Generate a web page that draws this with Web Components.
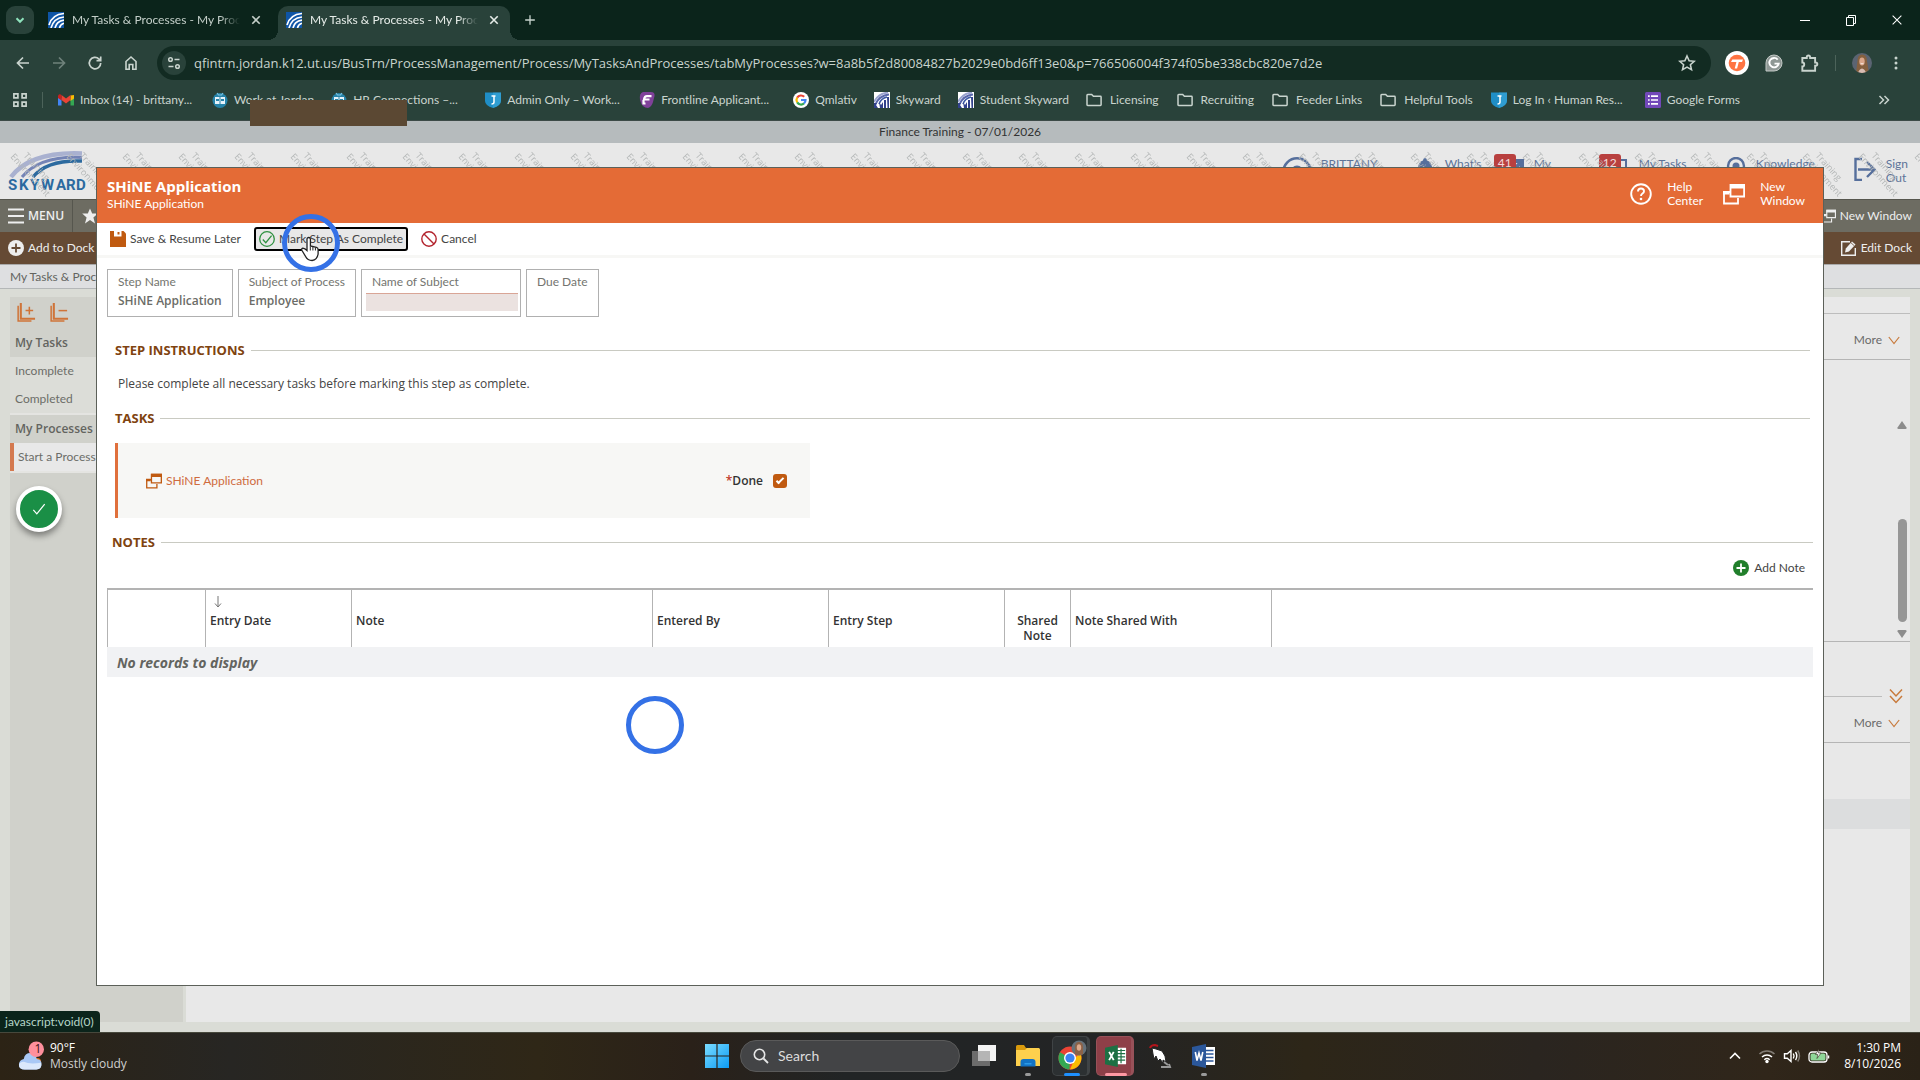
<!DOCTYPE html>
<html lang="en">
<head>
<meta charset="utf-8">
<title>My Tasks &amp; Processes - My Processes</title>
<style>
  html, body { margin: 0; height: 100%; overflow: hidden; }
  body { font: 12px/16px "Open Sans", "Noto Sans", sans-serif; --ui: Lato, "Open Sans", sans-serif; color: #444; }
</style>
</head>
<body>
<app-desktop></app-desktop>
<script>
const BASE = `<style>
  *, *::before, *::after { box-sizing: border-box; }
  button { font: inherit; color: inherit; background: none; border: 0; padding: 0; margin: 0; display: inline-flex; align-items: center; justify-content: center; white-space: nowrap; }
  a { color: inherit; text-decoration: none; }
  [hidden] { display: none; }
</style>`;
const define = (name, html) => customElements.define(name, class extends HTMLElement {
  constructor() {
    super();
    const t = document.createElement('template');
    t.innerHTML = BASE + (typeof html === 'function' ? html(this) : html);
    this.attachShadow({ mode: 'open' }).append(t.content.cloneNode(true));
  }
});

/* ---------- icons: [viewBox size, markup] ---------- */
const line = (d, w = 1.5) => `<path d="${d}" fill="none" stroke="currentColor" stroke-width="${w}"/>`;
const ICONS = {
  down: ['0 0 16 16', line('M4.5 6.3 8 9.8l3.5-3.5', 2)],
  close: ['0 0 16 16', line('M4.3 4.3l7.4 7.4M11.7 4.3l-7.4 7.4', 1.6)],
  plus: ['0 0 16 16', line('M8 2.5v11M2.5 8h11')],
  min: ['0 0 16 16', line('M3 8.5h10', 1)],
  restore: ['0 0 16 16', line('M3.5 5.5h7v8h-7zM5.5 5.300V3.500h7v8h-2', 1)],
  winclose: ['0 0 16 16', line('M3 3l10 10M13 3 3 13', 1.2)],
  back: ['0 0 16 16', line('M14 8H3M8 2.500 2.500 8 8 13.500', 1.7)],
  fwd: ['0 0 16 16', line('M2 8h11M8 2.500 13.500 8 8 13.500', 1.7)],
  reload: ['0 0 16 16', line('M13.700 8A5.700 5.700 0 1 1 12 4l1.500 1.500M13.700 1.500v4.200H9.500', 1.7)],
  home: ['0 0 16 16', line('M3 6.500 8 2l5 4.500V14.200H9.800V9.500H6.200v4.700H3z', 1.6)],
  tune: ['0 0 16 16', line('M8.500 4.500h5M2.500 11.500h5', 1.5) + '<g fill="none" stroke="currentColor" stroke-width="1.5"><circle cx="4.500" cy="4.500" r="1.800"/><circle cx="11.500" cy="11.500" r="1.800"/></g>'],
  star: ['0 0 16 16', line('M8 1.800l1.900 4.200 4.500.5-3.400 3 1 4.500L8 11.700 4 14l1-4.500-3.400-3 4.500-.5z', 1.4)],
  puzzle: ['0 0 18 18', line('M3 4.500h4V3.800a1.500 1.500 0 0 1 3 0v.7h4.500v4h.5a1.500 1.500 0 0 1 0 3h-.5V16H3v-4a1.700 1.700 0 0 0 0-3.400z', 1.7)],
  dots: ['0 0 16 16', '<g fill="currentColor"><circle cx="8" cy="3" r="1.500"/><circle cx="8" cy="8" r="1.500"/><circle cx="8" cy="13" r="1.500"/></g>'],
  apps: ['0 0 16 16', '<g fill="none" stroke="currentColor" stroke-width="1.700"><path d="M1.900 1.900h4v4h-4zM10.100 1.900h4v4h-4zM1.900 10.100h4v4h-4zM10.100 10.100h4v4h-4z"/></g>'],
  folder: ['0 0 16 16', line('M1 3.200q0-.7.700-.7h4l1.700 1.800h7q.7 0 .7.700v7.800q0 .7-.7.700H1.700q-.7 0-.7-.7z', 1.5)],
  more2: ['0 0 16 16', line('M3.500 4l4 4-4 4M8.500 4l4 4-4 4', 1.5)],
  sky: ['0 0 16 16', '<path fill="#0f55a6" d="M0 0h16v16H0z"/><path d="M1 13C3 6 9 2 16 1.500M3 16C5 9 10 5.500 16 5M7 16c1-4.500 4-7 9-7.800M11.500 16c.5-2.500 2-4 4.500-4.800" fill="none" stroke="#fff" stroke-width="1.700"/>'],
  sky2: ['0 0 16 16', '<path fill="#fff" d="M0 0h16v16H0z"/><path d="M0 10C3 4 8 1 14 .5" fill="none" stroke="#9aa3cf" stroke-width="1.800"/><path d="M1 13C4 6 9 3 15 2.500" fill="none" stroke="#5a68ac" stroke-width="1.800"/><path d="M5 12c1-3 4-6 8-7" fill="none" stroke="#3d5aa5" stroke-width="1.600"/><path d="M0 11h3l-1 2 2 3H0zM5 10l2 3 2-3v6H6zM10 8h2v8h-2zM13 5h2v11h-1.500z" fill="#31418c"/>'],
  gmail: ['0 0 16 16', '<path fill="#4285f4" d="M0 4v9.500h3.500V6.500z"/><path fill="#34a853" d="M16 4v9.500h-3.500V6.500z"/><path fill="#fbbc04" d="M12.500 3.500 16 3v3.500L12.500 9z"/><path fill="#ea4335" d="M3.500 3 8 6.500 12.500 3v5L8 11.500 3.500 8z"/><path fill="#c5221f" d="M0 3.500Q1.500 1.500 3.500 3v5.500L0 6z"/>'],
  robot: ['0 0 16 16', '<circle cx="8" cy="8.500" r="7.500" fill="#2683a8"/><path d="M5 1l1.500 2h3L11 1" fill="none" stroke="#7cc4e2" stroke-width="1.200"/><rect x="3" y="5" width="10" height="7" fill="#e6f3fa"/><path fill="#2683a8" d="M4 7h3v2H4zM9 7h3v2H9zM7.500 5h1v7h-1z"/>'],
  shield: ['0 0 16 16', '<path fill="#1f8ec6" d="M0 .5h16V9q0 4.500-8 7Q0 13.500 0 9z"/><path fill="#43b0dd" d="M8 .5h8V9q0 4.500-8 7z" opacity=".45"/><path d="M6.500 4h4M9 4v6q0 2-2.500 2" fill="none" stroke="#fff" stroke-width="1.500"/>'],
  frontline: ['0 0 16 16', '<path fill="#80419a" d="M4 0h8q4 0 3.500 4L14 10q-1.500 5-5 6-6 0-8-8-1-7 3-8z"/><path d="M12.500 4.200H8Q5.500 4.200 5 7.500h5.500M4.500 8v3.500h2" fill="none" stroke="#fff" stroke-width="2.200"/>'],
  google: ['0 0 16 16', '<circle cx="8" cy="8" r="8" fill="#fff"/><g fill="none" stroke-width="2.200"><path stroke="#ea4335" d="M4.200 5.600A4.500 4.500 0 0 1 11.200 4.800"/><path stroke="#fbbc04" d="M4.200 5.600a4.600 4.600 0 0 0 0 4.800"/><path stroke="#34a853" d="M4.200 10.400a4.500 4.500 0 0 0 6.800 1"/><path stroke="#4285f4" d="M11 11.400A4.500 4.500 0 0 0 12.500 8H8"/></g>'],
  forms: ['0 0 16 16', '<rect width="16" height="16" rx="1.500" fill="#7248b9"/><path stroke="#fff" stroke-width="1.700" d="M6 4.200h7M6 8h7M6 11.800h7"/><path stroke="#fff" stroke-width="1.700" d="M3 4.200h1.700M3 8h1.700M3 11.800h1.700"/>'],
  tango: ['0 0 24 24', '<circle cx="12" cy="12" r="12" fill="#fff"/><circle cx="12" cy="12" r="8.300" fill="#ff7442"/><path d="M6 11l1.300-2.500H18L17 11h-3.200l-1.700 6.500H9.700L11.400 11z" fill="#fff"/>'],
  grammarly: ['0 0 18 18', '<path fill="#8f9895" stroke="#c3c9c6" d="M9 1a8 8 0 1 1 0 16H1V9a8 8 0 0 1 8-8z"/><path d="M12.700 5.600a4.700 4.700 0 1 0 1 4H9.500" fill="none" stroke="#fff" stroke-width="1.900"/>'],
  avatar: ['0 0 20 20', '<clipPath id="c"><circle cx="10" cy="10" r="10"/></clipPath><g clip-path="url(#c)"><path fill="#5b6472" d="M0 0h20v20H0z"/><path fill="#85603f" d="M10 1.500q5 0 5 6.500l2 12H4L5.500 8Q5.500 1.500 10 1.500z"/><path fill="#d8bdb4" d="M6 20q1-4 4-4.500 3 .5 4 4.500z"/><ellipse cx="10" cy="8.500" rx="2.700" ry="4" fill="#dba68a"/><path d="M8.500 10.300q1.500 1.300 3 0" stroke="#fff" stroke-width=".8" fill="none"/></g>'],
  menu: ['0 0 16 16', line('M0 1.500h16M0 8h16M0 14.500h16', 2)],
  starfill: ['0 0 16 16', '<path fill="currentColor" d="M8 .5l2.200 5h5.600l-4.400 3.900 1.600 6.100L8 12l-5 3.500 1.600-6.100L.2 5.500h5.600z"/>'],
  addfill: ['0 0 16 16', '<circle cx="8" cy="8" r="8" fill="currentColor"/><path d="M8 3.500v9M3.500 8h9" stroke="var(--cut,#654a34)" stroke-width="1.800"/>'],
  newwin: ['0 0 22 22', '<path fill="none" stroke="currentColor" stroke-width="1.800" d="M8 9H1v11.500h14V15"/><path fill="none" stroke="currentColor" stroke-width="1.800" d="M7.500 2h13.600v11.500H7.500z"/><path fill="currentColor" d="M7 1h15v4.500H7zM0 8h6.500v3.500H0z"/>'],
  edit: ['0 0 16 16', '<path fill="none" stroke="currentColor" stroke-width="1.400" d="M9 1.700H.7v13.600h13.600V8"/><path fill="currentColor" d="M4 12.500l.8-4L11 1.500 14.500 4.500 8 11.500z"/><path d="M10 2.800l3.300 3" stroke="#654a34" stroke-width=".8"/>'],
  user: ['0 0 30 30', '<circle cx="15" cy="15" r="13.700" fill="none" stroke="currentColor" stroke-width="2.600"/><circle cx="15" cy="15" r="6.500" fill="currentColor"/>'],
  bell: ['0 0 22 22', '<path fill="currentColor" d="M11 1q2 0 2 2.500 5 1.500 5 8l2.500 7h-19L4 11.500q0-6.500 5-8Q9 1 11 1z"/>'],
  export: ['0 0 22 22', line('M8 4h11v12M19 4 8 16', 4)],
  tasks: ['0 0 22 22', line('M2 3h16v17H2z', 2)],
  bulb: ['0 0 22 22', '<circle cx="11" cy="9" r="8" fill="none" stroke="currentColor" stroke-width="2.400"/><circle cx="11" cy="9" r="3.500" fill="currentColor"/>'],
  signout: ['0 0 24 24', line('M9 2H2.500v21H9M5 12.500h16M14 5 21.500 12.500 14 20', 2.4)],
  help: ['0 0 22 22', '<circle cx="11" cy="11" r="9.800" fill="none" stroke="currentColor" stroke-width="1.900"/><path d="M8 8.500q0-3 3-3t3 2.700q0 1.300-1.500 2.300T11 13" fill="none" stroke="currentColor" stroke-width="1.900"/><circle cx="11" cy="16" r="1.300" fill="currentColor"/>'],
  save: ['0 0 16 16', '<path fill="#c05a10" d="M0 0h13.500L16 2.500V16H0z"/><path fill="#fff" d="M4 0h7.500v5.500H4z"/><path fill="#c05a10" d="M7.500 1h2v2.500h-2z"/>'],
  check: ['0 0 16 16', '<circle cx="8" cy="8" r="7.300" fill="none" stroke="#2f9141" stroke-width="1.300"/><path d="M3.800 8.500l3 3.200 5.800-7" fill="none" stroke="#2f9141" stroke-width="1.300"/>'],
  ban: ['0 0 16 16', '<circle cx="8" cy="8" r="7.200" fill="none" stroke="#b3242e" stroke-width="1.400"/><path d="M3 3l10 10" stroke="#b3242e" stroke-width="1.400"/>'],
  expand: ['0 0 20 20', '<g fill="none" stroke="#cf7439" stroke-width="1.600"><path d="M1.200 3v16h14"/><path d="M4 0v16.500h15" stroke-width="2.200"/><path d="M9 8h8M13 4v8"/></g>'],
  collapse: ['0 0 20 20', '<g fill="none" stroke="#cf7439" stroke-width="1.600"><path d="M1.200 3v16h14"/><path d="M4 0v16.500h15" stroke-width="2.200"/><path d="M9 8h9"/></g>'],
  tick: ['0 0 16 16', line('M1.500 9l4 4.500L14.500 2.500', 1.4)],
  sort: ['0 0 10 12', line('M5 0v11M2 7.500 5 11l3-3.500', 1)],
  chev: ['0 0 12 12', line('M.8 3 6 9.500 11.200 3', 1.2)],
  chev2: ['0 0 14 16', line('M1 1.500l6 6.500 6-6.500M1 8l6 6.500L13 8', 1.5)],
  tri: ['0 0 10 8', '<path fill="#8c8c8c" d="M5 0l4.500 6.500q.5 1.500-1 1.500h-7Q0 8 .5 6.500z"/>'],
  weather: ['0 0 28 32', '<circle cx="21" cy="22" r="4" fill="#e0701c"/><path d="M8 30q-6 0-6-5.500Q2.500 20 7 19q1-6 7-6 5.500.5 6.500 6 5 .5 5 5.500T20 30z" fill="#a9c8f5"/><path d="M8 30q-6 0-6-5 1-3 5-3 6 3 18 1 1 7-5 7z" fill="#dbe8fb"/><circle cx="20" cy="9" r="8" fill="#ff8f9c"/>'],
  win: ['0 0 24 24', '<linearGradient id="g" x1="0" y1="0" x2="1" y2="1"><stop offset="0" stop-color="#7adcff"/><stop offset="1" stop-color="#0c9bf5"/></linearGradient><path fill="url(#g)" d="M0 0h11.400v11.400H0zM12.600 0H24v11.400H12.600zM0 12.600h11.400V24H0zM12.600 12.600H24V24H12.600z"/>'],
  search: ['0 0 16 16', line('M10.500 10.500 15 15', 1.8) + '<circle cx="6.500" cy="6.500" r="5.200" fill="none" stroke="currentColor" stroke-width="1.600"/>'],
  taskview: ['0 0 24 24', '<path fill="#6c6c6c" d="M0 7h18v15H0z"/><path fill="#f4f4f4" d="M6 1h18v16H6z"/><path fill="#b5b5b5" d="M6 7h12v10H6z"/>'],
  files: ['0 0 24 24', '<path fill="#d99a0c" d="M0 2.500Q0 1 1.500 1H8l2 3h13v4H0z"/><path fill="#fdd04d" d="M0 6h9l2-2h11.500Q24 4 24 5.500V22H0z"/><path fill="#1273c4" d="M4.500 18q0-3 3-3h9q3 0 3 3v4.500h-15z"/><path fill="#2b9be6" d="M8.500 19h7v1.500h-7z"/>'],
  chrome: ['0 0 32 32', '<circle cx="14" cy="18" r="11.500" fill="#ea4335"/><path fill="#34a853" d="M4 12.200 14 18l-.5 11.500A11.500 11.500 0 0 1 4 12.200z"/><path fill="#fbbc04" d="M14 29.500 19 18l5.200-5.200A11.500 11.500 0 0 1 14 29.500z"/><circle cx="14" cy="18" r="6" fill="#fff"/><circle cx="14" cy="18" r="4.600" fill="#3b82f2"/><circle cx="23" cy="8" r="7.500" fill="#66717a"/><path fill="#8b6248" d="M23 2q4 0 4 5v7q-4 2.500-8 0V7q0-5 4-5z"/><ellipse cx="23" cy="7.500" rx="2.200" ry="3.200" fill="#dca98c"/>'],
  excel: ['0 0 24 24', '<path fill="#fff" d="M12 3h11v18H12z"/><path d="M13 6h9M13 9.500h9M13 13h9M13 16.500h9M17.500 4v16" stroke="#1d7044" stroke-width="1.300"/><path fill="#1d7044" d="M0 3 14 0v24L0 21z"/><path d="M4.500 7.500l5 9M9.500 7.500l-5 9" stroke="#fff" stroke-width="2"/>'],
  hand: ['0 0 24 24', '<path d="M2 4q1-3 5-3l3 1" stroke="#b3141b" stroke-width="2" fill="none"/><path fill="#fff" stroke="#222" d="M4 4l4 1 6 2 3 5 1 6-3-2 0 3-3-4-2 2-2-5-2 3-1-5z"/><path d="M16 18l4 3M13 23h9l-1-3" stroke="#999" stroke-width="2" fill="none"/>'],
  word: ['0 0 24 24', '<path fill="#fff" d="M12 3h11v18H12z"/><path d="M14 6.500h7.500M14 10h7.500M14 13.500h7.500M14 17h7.500" stroke="#2b579a" stroke-width="1.300"/><path fill="#2b579a" d="M0 3 14 0v24L0 21z"/><path d="M3.300 8l1.700 8.500L7 9l2 7.500L10.800 8" fill="none" stroke="#fff" stroke-width="1.600"/>'],
  up: ['0 0 16 16', line('M3 10.500 8 5.500l5 5', 1.6)],
  wifi: ['0 0 18 16', '<g fill="none" stroke="currentColor" stroke-width="1.500"><path opacity=".4" d="M1.500 6a11 11 0 0 1 15 0"/><path d="M4 9a7.500 7.500 0 0 1 10 0M6.300 11.700a4 4 0 0 1 5.400 0"/></g><circle cx="9" cy="13.500" r="1.700" fill="currentColor"/>'],
  volume: ['0 0 18 16', '<g fill="none" stroke="currentColor" stroke-width="1.400"><path d="M1.500 5.800h2.800L8 2.500v11L4.300 10.200H1.500zM10.300 5.500q1.500 2.500 0 5M12.500 4q2.600 4 0 8"/><path opacity=".4" d="M14.700 2.500q3.600 5.500 0 11"/></g>'],
  battery: ['0 0 22 16', '<rect x="1" y="4" width="18" height="10" rx="3" fill="none" stroke="#fff" stroke-width="1.300"/><rect x="2.500" y="5.500" width="15" height="7" rx="1.500" fill="#8fd698"/><path d="M20.500 7.500v3" stroke="#fff" stroke-width="1.500"/><path fill="#fff" stroke="#2b2317" stroke-width=".6" d="M11 1 7.500 6.500h2.300l-.8 4L13 5h-2.500z"/>'],
  pointer: ['0 0 20 26', '<path d="M7 14.500V3.200a1.700 1.700 0 0 1 3.400 0V10l6 1.400q1.700.5 1.700 2.400V18q-1 6-6 6.500-4.500 0-6.500-4L2 14.500q-1-2 .8-2.300Q5 12.500 7 14.500z" fill="#fff" stroke="#222" stroke-width="1.300"/><path d="M10.300 10.500v4M12.900 11v3.500M15.400 11.500v3" stroke="#222"/>']
};
define('ui-icon', el => {
  const [box, body] = ICONS[el.getAttribute('name')];
  const w = el.getAttribute('w') || 16, h = el.getAttribute('h') || w;
  return `<style>:host{display:block;flex:none;width:${w}px;height:${h}px} svg{display:block;width:100%;height:100%}</style>
  <svg viewBox="${box}" aria-hidden="true">${body}</svg>`;
});

/* ---------- browser window ---------- */
define('browser-tab', `<style>
  :host{display:flex;align-items:center;gap:8px;width:232px;height:34px;padding:0 8px 6px;color:#c4cfc9;position:relative;font:12px/16px var(--ui)}
  :host([active]){background:#29423a;border-radius:10px 10px 0 0;color:#e6ece8}
  :host([active])::before,:host([active])::after{content:"";position:absolute;bottom:0;width:10px;height:10px}
  :host([active])::before{left:-10px;background:radial-gradient(circle at 0 0,transparent 10px,#29423a 10px)}
  :host([active])::after{right:-10px;background:radial-gradient(circle at 100% 0,transparent 10px,#29423a 10px)}
  span{flex:1;overflow:hidden;white-space:nowrap;-webkit-mask-image:linear-gradient(90deg,#000 88%,transparent)}
</style><ui-icon name="sky"></ui-icon><span><slot></slot></span><button aria-label="Close tab"><ui-icon name="close"></ui-icon></button>`);

define('bookmark-link', el => `<style>
  :host{display:block;flex:none}
  :host([long]){width:154px}
  a{display:flex;align-items:center;gap:6px;padding-right:17px}
  :host([icon=folder]) a{gap:8px;padding-right:18px}
  span{white-space:nowrap}
</style><a href="#"><ui-icon name="${el.getAttribute('icon')}"></ui-icon><span><slot></slot></span></a>`);

define('browser-chrome', `<style>
  :host{display:block;background:#29423a;color:#c9d4ce;border-bottom:1px solid #3c4a47;position:relative}
  .strip{display:flex;height:40px;padding:6px 0 0 6px;gap:6px;background:#0b241b}
  .pick{width:28px;height:28px;border-radius:9px;background:#29423a;color:#8fe3bd}
  .new{width:28px;height:28px;margin-left:0}
  .win{display:flex;margin-left:auto;color:#fff}
  .win button{width:46px;height:28px}
  .bar{display:flex;align-items:center;height:40px;padding:6px 16px 0 5px}
  .nav{width:36px;height:34px}
  .dim{color:#6f827b}
  .omni{flex:1;display:flex;align-items:center;height:34px;margin:0 14px 0 8px;padding:0 15px 0 5px;border-radius:17px;background:#122b22}
  .tune{width:24px;height:24px;border-radius:50%;background:#29423a;margin-right:8px}
  input{flex:1;min-width:0;border:0;outline:0;padding:0;background:none;font:13px/20px "Open Sans","Noto Sans",sans-serif;color:#c9d4ce}
  .ext{display:flex;align-items:center;gap:16px}
  .sep{width:1px;height:16px;background:#4c635a}
  .marks{display:flex;align-items:center;height:40px;padding:0 28px 0 12px;font:12px/16px var(--ui)}
  .marks .sep{margin:0 15px 0 14px}
  .marks .end{margin-left:auto}
  .patch{position:absolute;left:250px;bottom:-6px;width:157px;height:26px;background:#5b4833;z-index:3}
</style>
<div class="strip">
  <button class="pick" aria-label="Search tabs"><ui-icon name="down"></ui-icon></button>
  <browser-tab>My Tasks &amp; Processes - My Proc</browser-tab>
  <browser-tab active>My Tasks &amp; Processes - My Proc</browser-tab>
  <button class="new" aria-label="New tab"><ui-icon name="plus" w="14"></ui-icon></button>
  <div class="win"><button aria-label="Minimize"><ui-icon name="min"></ui-icon></button><button aria-label="Restore"><ui-icon name="restore"></ui-icon></button><button aria-label="Close"><ui-icon name="winclose" w="14"></ui-icon></button></div>
</div>
<div class="bar">
  <button class="nav" aria-label="Back"><ui-icon name="back"></ui-icon></button>
  <button class="nav dim" aria-label="Forward"><ui-icon name="fwd"></ui-icon></button>
  <button class="nav" aria-label="Reload"><ui-icon name="reload"></ui-icon></button>
  <button class="nav" aria-label="Home"><ui-icon name="home"></ui-icon></button>
  <div class="omni">
    <button class="tune" aria-label="Site information"><ui-icon name="tune"></ui-icon></button>
    <input aria-label="Address" value="qfintrn.jordan.k12.ut.us/BusTrn/ProcessManagement/Process/MyTasksAndProcesses/tabMyProcesses?w=8a8b5f2d80084827b2029e0bd6ff13e0&amp;p=766506004f374f05be338cbc820e7d2e">
    <button aria-label="Bookmark"><ui-icon name="star" w="18"></ui-icon></button>
  </div>
  <div class="ext">
    <button aria-label="Tango"><ui-icon name="tango" w="24"></ui-icon></button>
    <button aria-label="Grammarly"><ui-icon name="grammarly" w="18"></ui-icon></button>
    <button aria-label="Extensions"><ui-icon name="puzzle" w="20"></ui-icon></button>
    <div class="sep"></div>
    <button aria-label="Profile"><ui-icon name="avatar" w="20"></ui-icon></button>
    <button aria-label="Menu"><ui-icon name="dots"></ui-icon></button>
  </div>
</div>
<div class="marks">
  <button aria-label="Apps"><ui-icon name="apps"></ui-icon></button><div class="sep"></div>
  <bookmark-link long icon="gmail">Inbox (14) - brittany...</bookmark-link>
  <bookmark-link icon="robot">Work at Jordan</bookmark-link>
  <bookmark-link long icon="robot">HR Connections –...</bookmark-link>
  <bookmark-link long icon="shield">Admin Only – Work...</bookmark-link>
  <bookmark-link long icon="frontline">Frontline Applicant...</bookmark-link>
  <bookmark-link icon="google">Qmlativ</bookmark-link>
  <bookmark-link icon="sky2">Skyward</bookmark-link>
  <bookmark-link icon="sky2">Student Skyward</bookmark-link>
  <bookmark-link icon="folder">Licensing</bookmark-link>
  <bookmark-link icon="folder">Recruiting</bookmark-link>
  <bookmark-link icon="folder">Feeder Links</bookmark-link>
  <bookmark-link icon="folder">Helpful Tools</bookmark-link>
  <bookmark-link long icon="shield">Log In ‹ Human Res...</bookmark-link>
  <bookmark-link icon="forms">Google Forms</bookmark-link>
  <button class="end" aria-label="More bookmarks"><ui-icon name="more2"></ui-icon></button>
</div>
<div class="patch"></div>`);

/* ---------- Skyward page behind the dialog ---------- */
define('sky-logo', `<style>:host{display:block;width:80px;height:44px;flex:none}.w{display:block;width:100%;height:100%}</style>
<svg class="w" viewBox="0 0 80 44" role="img" aria-label="Skyward"><g fill="none">
<path d="M3 26C16 9 38 1 74 2.500" stroke="#a9b1d0" stroke-width="4.500"/><path d="M14 26C25 13 43 5 74 6.500" stroke="#7484b6" stroke-width="3"/><path d="M25 26C33 16 49 9 74 10" stroke="#2c6a9f" stroke-width="3.500"/></g>
<text font-family="Roboto, sans-serif" font-weight="700" font-size="15" fill="#2c6a9f"><tspan x="0" y="39">S</tspan><tspan x="11">K</tspan><tspan x="22">Y</tspan><tspan x="33">W</tspan><tspan x="48">A</tspan><tspan x="58">R</tspan><tspan x="68">D</tspan></text></svg>`);

define('head-link', el => `<style>
  :host{display:block;position:relative}
  a{display:grid;grid-template-columns:${el.getAttribute('w')}px auto;gap:9px;align-items:start;justify-content:start;color:#5d7398;font:12px/14px var(--ui)}
  ui-icon{color:#566f9c}
  b{position:absolute;right:calc(100% - 13px);top:-3px;height:20px;padding:0 4px;border-radius:3px;background:#b8403f;color:#f2dcdc;font:12px/17px var(--ui)}
</style><a href="#"><ui-icon name="${el.getAttribute('icon')}" w="${el.getAttribute('w')}"></ui-icon><span><slot></slot></span></a>${el.hasAttribute('badge') ? `<b>${el.getAttribute('badge')}</b>` : ''}`);

define('page-header', `<style>
  :host{display:flex;align-items:flex-start;height:56px;padding:8px 12px 0 8px;background:#e8e8e8;position:relative}
  nav{margin-left:auto;display:grid;grid-template-columns:132px 89px 105px 117px 128px auto;padding-top:6px}
  .mark{position:absolute;inset:0;width:100%;height:100%;pointer-events:none}
</style>
<sky-logo></sky-logo>
<nav>
  <head-link icon="user" w="30">BRITTANY</head-link>
  <head-link icon="bell" w="22">What's</head-link>
  <head-link icon="export" w="22" badge="41">My</head-link>
  <head-link icon="tasks" w="22" badge="12">My Tasks</head-link>
  <head-link icon="bulb" w="22">Knowledge</head-link>
  <head-link icon="signout" w="24">Sign<br>Out</head-link>
</nav>
<svg class="mark" aria-hidden="true"><defs><pattern id="t" width="56" height="56" x="8" patternUnits="userSpaceOnUse">
<g font-family="Open Sans, sans-serif" font-size="9" fill="#b4b7b7"><text transform="translate(2 14) rotate(48)">Environment</text><text transform="translate(15 13) rotate(48)">Training</text></g></pattern></defs><rect width="100%" height="100%" fill="url(#t)"/></svg>`);

define('side-nav', `<style>
  :host{display:flex;flex-direction:column;width:173px;flex:none;background:#d0d1cb;font:12px/28px var(--ui);color:#6c6d68}
  .tools{display:flex;gap:14px;padding:6px 7px 7px}
  a{display:block;height:28px;padding-left:5px;background:#dcddd8}
  h2{margin:0;height:28px;padding-left:5px;font:600 12px/28px "Open Sans",sans-serif;color:#63645f}
  h2.gap{border-top:2px solid #e4e4e1;height:30px}
  a.on{background:#e8e8e8;border-left:4px solid #d4794f;border-bottom:0;padding-left:4px}
  .tail{height:2px;background:#e4e4e1}
</style>
<div class="tools"><button aria-label="Expand all"><ui-icon name="expand" w="19"></ui-icon></button><button aria-label="Collapse all"><ui-icon name="collapse" w="19"></ui-icon></button></div>
<h2>My Tasks</h2><a href="#">Incomplete</a><a href="#">Completed</a>
<h2 class="gap">My Processes</h2><a href="#" class="on">Start a Process</a><div class="tail"></div>`);

define('process-pane', `<style>
  :host{display:flex;flex-direction:column;flex:1;background:#e8e8e8;font:12px/16px var(--ui);color:#6a6a6a}
  .top{height:17px;border-bottom:1px solid #bdbdbd}
  .more{display:flex;justify-content:flex-end;align-items:center;height:46px;padding:6px 10px 0 0;border-bottom:1px solid #b5b5b5}
  .more button{gap:6px} .more ui-icon,.rule ui-icon{color:#c87a3c}
  .scroll{display:flex;flex-direction:column;align-items:flex-end;height:282px;padding:61px 3px 0;border-bottom:1px solid #b5b5b5}
  .thumb{width:9px;height:103px;margin:90px 0 8px;border-radius:5px;background:#969696}
  .flip{transform:rotate(180deg)}
  .rule{display:flex;align-items:center;gap:7px;padding:46px 7px 0 0}
  .rule i{flex:1;height:1px;background:#bdbdbd}
  .short{height:39px;padding-top:0}
  .band{height:30px;margin-top:56px;background:#dcddde}
</style>
<div class="top"></div>
<div class="more"><button>More <ui-icon name="chev" w="12"></ui-icon></button></div>
<div class="scroll"><ui-icon name="tri" w="10" h="8"></ui-icon><div class="thumb"></div><ui-icon class="flip" name="tri" w="10" h="8"></ui-icon></div>
<div class="rule"><i></i><button aria-label="Expand section"><ui-icon name="chev2" w="14" h="16"></ui-icon></button></div>
<div class="more short"><button>More <ui-icon name="chev" w="12"></ui-icon></button></div>
<div class="band"></div>`);

define('sky-page', `<style>
  :host{display:flex;flex-direction:column;flex:1;position:relative;min-height:0;background:#dadcd6}
  .env{height:22px;background:#b6bbbd;text-align:center;font:12px/22px var(--ui);color:#333}
  .menu,.dock{display:flex;align-items:center;justify-content:space-between;padding:0 8px;color:#eee;font:12px/16px var(--ui)}
  .menu{height:33px;background:#6d6c62;border-top:1px solid #56564e}
  .dock{height:32px;background:#654a34}
  .menu button,.dock button{gap:4px}
  .left{display:flex;align-items:center}
  .left button+button{height:32px;margin-left:8px;padding-left:9px;border-left:1px solid #56564e}
  strong{font:600 12px/16px "Open Sans",sans-serif}
  .crumb{height:25px;padding-left:10px;background:#dedfe1;border-top:1px solid #a9a9a9;border-bottom:1px solid #b4b7b8;font:12px/24px var(--ui);color:#63645f}
  .work{display:flex;flex:1;gap:3px;padding:8px 10px 10px}
  .done{position:absolute;left:16px;top:365px;width:46px;height:46px;border:4px solid #fff;border-radius:50%;background:#1a8f46;color:#fff;box-shadow:0 4px 6px #0006}
  .status{position:absolute;left:0;bottom:0;height:21px;padding:0 6px 0 5px;border-radius:0 4px 0 0;background:#0b241b;color:#b5d6c8;font:12px/21px var(--ui)}
  process-dialog{position:absolute;inset:46px 96px}
</style>
<div class="env">Finance Training - 07/01/2026</div>
<page-header></page-header>
<div class="menu"><div class="left"><button><ui-icon name="menu"></ui-icon><strong>MENU</strong></button><button aria-label="Favorites"><ui-icon name="starfill"></ui-icon></button></div><button><ui-icon name="newwin" w="14"></ui-icon>New Window</button></div>
<div class="dock"><button><ui-icon name="addfill"></ui-icon>Add to Dock</button><button><ui-icon name="edit"></ui-icon>Edit Dock</button></div>
<div class="crumb">My Tasks &amp; Processes</div>
<div class="work"><side-nav></side-nav><process-pane></process-pane></div>
<process-dialog></process-dialog>
<button class="done" aria-label="Guide complete"><ui-icon name="tick" w="14"></ui-icon></button>
<div class="status">javascript:void(0)</div>`);

/* ---------- dialog ---------- */
define('info-card', `<style>
  :host{display:block;height:48px;padding:3px 10px;border:1px solid #b0b0b0;color:#74756f;font:12px/18px var(--ui);white-space:nowrap}
  :host([wide]){width:160px;padding-right:2px}
  ::slotted(b){display:block;font:600 12px/20px "Open Sans",sans-serif;color:#6b6c67}
  ::slotted(i){display:block;height:18px;margin:2px 0 0 -6px;background:#ebe2e0;border-top:1px solid #d9a596}
</style><slot name="label"></slot><slot></slot>`);

define('section-title', `<style>
  :host{display:flex;align-items:center;gap:6px;padding:0 3px 0 8px}
  :host([flush]){padding:0 0 0 5px}
  h3{margin:0;font:700 13px/20px "Open Sans",sans-serif;color:#7f4310}
  i{flex:1;height:1px;background:#c9cac2}
</style><h3><slot></slot></h3><i></i>`);

define('task-row', `<style>
  :host{display:flex;align-items:center;width:695px;height:75px;padding:0 23px 0 28px;border-left:3px solid #e0703c;background:#f7f7f5}
  a{display:flex;align-items:center;gap:4px;font:12px/16px var(--ui);color:#cf6b3e}
  a ui-icon{color:#c05a10}
  label{margin-left:auto;display:flex;align-items:center;gap:10px;font:600 12px/16px "Open Sans",sans-serif;color:#333}
  em{font-style:normal;color:#c0392b}
  input{appearance:none;margin:0;width:14px;height:14px;border-radius:3px;background:#c05a10;display:grid;place-items:center}
  input:checked::after{content:"";width:8px;height:4px;border:solid #fff;border-width:0 0 2px 2px;transform:rotate(-45deg);margin-bottom:2px}
</style><a href="#"><ui-icon name="newwin"></ui-icon><slot></slot></a><label><span><em>*</em>Done</span><input type="checkbox" checked></label>`);

define('notes-table', `<style>
  :host{display:block}
  table{width:100%;table-layout:fixed;border-collapse:separate;border-spacing:0;border-top:2px solid #b3b3b3}
  th{height:57px;padding:0 4px;border-left:1px solid #b3b3b3;text-align:left;vertical-align:top;font:600 12px/15px "Open Sans",sans-serif;color:#333}
  th div{height:23px;padding:6px 3px 0;color:#777}
  th.c{text-align:center}
  td{height:30px;padding:2px 10px 0;background:#f1f2f4;font:italic 700 14px/20px "Open Sans",sans-serif;color:#63645f}
</style>
<table><colgroup><col style="width:98px"><col style="width:146px"><col style="width:301px"><col style="width:176px"><col style="width:176px"><col style="width:66px"><col style="width:201px"><col></colgroup>
<thead><tr><th><div></div></th><th><div><ui-icon name="sort" w="10" h="12"></ui-icon></div>Entry Date</th><th><div></div>Note</th><th><div></div>Entered By</th><th><div></div>Entry Step</th><th class="c"><div></div>Shared Note</th><th><div></div>Note Shared With</th><th></th></tr></thead>
<tbody><tr><td colspan="8">No records to display</td></tr></tbody></table>`);

define('process-dialog', `<style>
  :host{display:flex;flex-direction:column;background:#fff;border:1px solid #5c6059;z-index:1}
  header{display:flex;align-items:center;height:55px;padding:0 18px 3px 10px;background:#e46b36;color:#fff}
  h1{margin:0;font:700 15px/20px "Open Sans",sans-serif}
  p{margin:0;font:12px/16px var(--ui)}
  .acts{margin-left:auto;display:flex;gap:20px;font:12px/14px var(--ui)}
  .acts button{gap:15px;text-align:left}
  .tools{display:flex;align-items:center;height:35px;padding:0 8px;gap:8px;border-bottom:3px solid #f7f7f5;font:12px/16px var(--ui);color:#444;margin:0}
  .tools button{height:24px;padding:0 5px;gap:4px}
  .tools .focus{border:2px solid #000;border-radius:3px;background:#e8e8e8;padding:0 3px;margin:0}
  .body{padding:11px 10px 0}
  .cards{display:flex;gap:5px;margin-bottom:23px}
  .msg{margin:14px 0 14px 11px;font:12px/20px "Open Sans",sans-serif;color:#444}
  task-row{margin:15px 0 14px 8px}
  .add{display:flex;justify-content:flex-end;padding:6px 8px 10px 0;font:12px/20px var(--ui);color:#444}
  .add button{gap:5px} .add ui-icon{color:#217f2b;--cut:#fff}
</style>
<header><div><h1>SHiNE Application</h1><p>SHiNE Application</p></div>
<div class="acts"><button><ui-icon name="help" w="22"></ui-icon><span>Help<br>Center</span></button><button><ui-icon name="newwin" w="22"></ui-icon><span>New<br>Window</span></button></div></header>
<div class="tools"><button><ui-icon name="save"></ui-icon>Save &amp; Resume Later</button><button class="focus"><ui-icon name="check"></ui-icon>Mark Step As Complete</button><button><ui-icon name="ban"></ui-icon>Cancel</button></div>
<div class="body">
  <div class="cards">
    <info-card><span slot="label">Step Name</span><b>SHiNE Application</b></info-card>
    <info-card><span slot="label">Subject of Process</span><b>Employee</b></info-card>
    <info-card wide><span slot="label">Name of Subject</span><i></i></info-card>
    <info-card><span slot="label">Due Date</span></info-card>
  </div>
  <section-title>STEP INSTRUCTIONS</section-title>
  <div class="msg">Please complete all necessary tasks before marking this step as complete.</div>
  <section-title>TASKS</section-title>
  <task-row>SHiNE Application</task-row>
  <section-title flush>NOTES</section-title>
  <div class="add"><button><ui-icon name="addfill"></ui-icon>Add Note</button></div>
  <notes-table></notes-table>
</div>`);

/* ---------- taskbar ---------- */
define('task-bar', `<style>
  :host{display:grid;grid-template-columns:1fr auto 1fr;align-items:center;height:48px;padding-bottom:2px;border-top:1px solid #47483c;background:linear-gradient(90deg,#2c2315,#272623 12%,#2f2717 28%,#2a2119 36%,#212425 44%,#232425 58%,#2d2618 68%,#2a2520 80%,#30261a 92%,#2a2217);color:#fff}
  .wx{display:flex;gap:6px;padding-left:17px;position:relative;justify-content:start;text-align:left}
  .wx small{color:#cfcfcf;font-size:12px} .wx u{position:absolute;left:34px;top:1px;width:8px;text-align:center;text-decoration:none;color:#3a1418}
  .mid{display:flex;align-items:center;padding-left:1px}
  .app{width:44px;height:40px;position:relative}
  .app::after{content:"";position:absolute;bottom:0;left:50%;width:var(--dot,0);height:3px;margin-left:calc(var(--dot,0px)/-2);border-radius:2px;background:var(--dc,#9a9a9a)}
  .box::before{content:"";position:absolute;inset:0 4px 0 2px;border-radius:5px;background:var(--bg);border:1px solid #ffffff18;border-right-width:3px}
  .box ui-icon{position:relative}
  label{display:flex;align-items:center;gap:9px;width:220px;height:32px;padding:0 12px;margin:0 2px 0 1px;border-radius:16px;background:#434446;border:1px solid #5a5a5a;color:#e6e6e6}
  input{border:0;background:none;outline:0;padding:0;width:140px;font:14px/18px Lato,sans-serif;color:#ddd} input::placeholder{color:#ddd}
  .tray{display:flex;align-items:center;justify-content:flex-end;gap:7px;padding-right:19px}
  .tray .upb{margin-right:8px}
  time{margin-left:7px;text-align:right}
</style>
<button class="wx"><ui-icon name="weather" w="27" h="32"></ui-icon><u>1</u><span>90°F<br><small>Mostly cloudy</small></span></button>
<div class="mid">
  <button class="app" aria-label="Start"><ui-icon name="win" w="24"></ui-icon></button>
  <label><ui-icon name="search"></ui-icon><input aria-label="Search" placeholder="Search"></label>
  <button class="app" aria-label="Task view"><ui-icon name="taskview" w="24"></ui-icon></button>
  <button class="app" style="--dot:6px" aria-label="File Explorer"><ui-icon name="files" w="24"></ui-icon></button>
  <button class="app box" style="--dot:16px;--dc:#1e90ff;--bg:#2c3032" aria-label="Chrome"><ui-icon name="chrome" w="32"></ui-icon></button>
  <button class="app box" style="--dot:22px;--dc:#ff98a4;--bg:#8e3f48" aria-label="Excel"><ui-icon name="excel" w="22"></ui-icon></button>
  <button class="app" aria-label="Pointer tool"><ui-icon name="hand" w="24"></ui-icon></button>
  <button class="app" style="--dot:6px" aria-label="Word"><ui-icon name="word" w="24"></ui-icon></button>
</div>
<div class="tray"><button class="upb" aria-label="Hidden icons"><ui-icon name="up"></ui-icon></button><ui-icon name="wifi" w="18" h="16"></ui-icon><ui-icon name="volume" w="18" h="16"></ui-icon><ui-icon name="battery" w="22" h="16"></ui-icon><time>1:30 PM<br>8/10/2026</time></div>`);

define('click-ring', `<style>:host{display:block;position:absolute;width:58px;height:58px;border:5px solid #3471e6;border-radius:50%;box-sizing:border-box;z-index:5;pointer-events:none}</style>`);

define('app-desktop', `<style>
  :host{display:flex;flex-direction:column;height:100vh;position:relative;overflow:hidden}
  browser-chrome{z-index:4}
  .r1{left:282px;top:214px} .r2{left:626px;top:696px}
  .ptr{position:absolute;left:300px;top:236px;z-index:6}
</style>
<browser-chrome></browser-chrome><sky-page></sky-page><task-bar></task-bar>
<click-ring class="r1"></click-ring><click-ring class="r2"></click-ring><ui-icon class="ptr" name="pointer" w="20" h="26"></ui-icon>`);
</script>
</body>
</html>
